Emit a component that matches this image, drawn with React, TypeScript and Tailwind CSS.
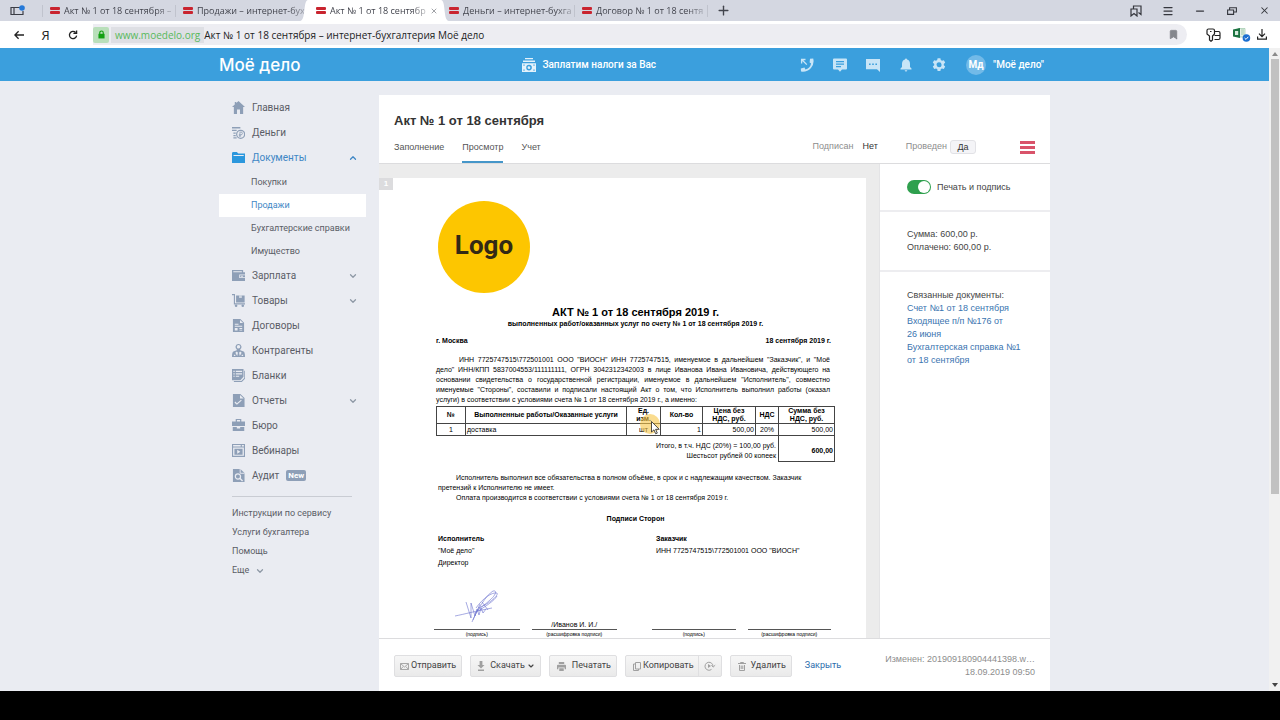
import type { ReactNode } from "react";
import { Bookmark, ChevronDown, ChevronUp, Menu, Minus, Plus, X } from "lucide-react";

const browserTabs = [
  { title: "Акт № 1 от 18 сентября –", active: false },
  { title: "Продажи – интернет-бух", active: false },
  { title: "Акт № 1 от 18 сентябр", active: true },
  { title: "Деньги – интернет-бухга", active: false },
  { title: "Договор № 1 от 18 сентя", active: false },
];

const icons: Record<string, ReactNode> = {
  home: <path d="M7 0 14 6.5h-2V14H8.6V9.2H5.4V14H2V6.5H0L3 3.7V1h1.6v1.2z" />,
  money: (
    <>
      <path d="M0 1h9v1.6H0zM0 4h5v1.5H0zM1.5 7H4v1.4H1.5zM1.5 9.6H4V11H1.5zM1.5 12H5v1.5H1.5z" />
      <circle cx="9.3" cy="9" r="4.3" fill="none" stroke="currentColor" strokeWidth="1.3" />
      <path d="M8.5 11.8V6.6h1.3a1.4 1.4 0 0 1 0 2.8H7.4M7.4 10.6h2.4" fill="none" stroke="currentColor" strokeWidth=".9" />
    </>
  ),
  folder: <path d="M0 2.5Q0 1 1.5 1h3.7l1.6 1.8H14V13H0zM1.6 4.4v.9h11v-.9z" fillRule="evenodd" />,
  wallet: (
    <path
      d="M0 1h12v2.5h2V13H0zM1.4 2.4v1.1h9.2V2.4zM7.8 6v3.8H14V9H8.8V6.8H14V6zM10 7.3v1.3h1.5V7.3z"
      fillRule="evenodd"
    />
  ),
  cart: (
    <>
      <path d="M0 0h3.2v10H14v1.4H2V1.4H0zM4.4 1.5h9.2v7.6H4.4z" />
      <path d="M7.6 1.5h3v2.8h-3z" fill="#eaecf2" opacity=".7" />
      <circle cx="4.4" cy="12.6" r="1.4" />
      <circle cx="11.6" cy="12.6" r="1.4" />
    </>
  ),
  contract: (
    <path
      d="M1 0h8l4 4v10H1zm7.6 1v3.4H12zM3 5.2v1h4v-1zM3 7.4v1h8v-1zM3 9.8v2.6h3V9.8zm5 0v1h3v-1zm0 1.7v1h3v-1z"
      fillRule="evenodd"
    />
  ),
  people: (
    <path
      d="M7 0a3.1 3.1 0 0 1 1.9 5.6v1.2l3.6 1.4Q14 9 14 14H0q0-5 1.5-5.8l3.6-1.4V5.6A3.1 3.1 0 0 1 7 0zm0 1.2a1.8 1.8 0 1 0 .1 3.7A1.8 1.8 0 0 0 7 1.2zM5.2 8 3.6 9.3l2 3.5.8-3.4zm3.6 0L7.6 9.4l.8 3.4 2-3.5zM2 11.6V13h1.6v-1.4zm8.4 0V13H12v-1.4z"
      fillRule="evenodd"
    />
  ),
  forms: (
    <path
      d="M0 0h12.4v8.4L9 12H0zm1.5 2v1.2h1.4V2zm2.6 0v1.2h6.8V2zM1.5 4.6v1.2h1.4V4.6zm2.6 0v1.2h6.8V4.6zM1.5 7.2v1.2h1.4V7.2zm2.6 0v1.2h3.6V7.2zM13.2 2H14v8.6L10.6 14H2v-1.1h8l3.2-3.2z"
      fillRule="evenodd"
    />
  ),
  reports: (
    <path
      d="M1 0h8l4.5 4.4V14H1zm7.6 1v3.9h4zM3.6 8.2l-.9 1.1 2.6 2.3 5.2-4.5-.8-1-4.4 3.8z"
      fillRule="evenodd"
    />
  ),
  briefcase: (
    <path
      d="M4 0h6v2.6h4v5H0v-5h4zm1.3 1.2v1.4h3.4V1.2zM.8 8.6h4.4v1.5h3.6V8.6h4.4V13H.8z"
      fillRule="evenodd"
    />
  ),
  webinar: (
    <path
      d="M0 0h14v14H0zm1.2 1.2v1.4h8.2V1.2zm9.4 0v1.4h2.2V1.2zM1.2 3.8v8.9h11.6V3.8zM2.6 5h8.8v6.5H2.6zm3 1.2v4.2L9 8.3z"
      fillRule="evenodd"
    />
  ),
  audit: (
    <>
      <path d="M1 0h8l4.5 4.4V14H1z" />
      <path d="M8.8 0v4.6h4.7" fill="none" stroke="#eaecf2" />
      <circle cx="6.4" cy="8" r="2.8" fill="none" stroke="#eaecf2" strokeWidth="1.3" />
      <path d="m8.4 10 3 3" stroke="#eaecf2" strokeWidth="1.5" />
    </>
  ),
};

interface NavItem {
  icon: string;
  label: string;
  expandable?: boolean;
  open?: boolean;
  badge?: string;
}

const mainNav: NavItem[] = [
  { icon: "home", label: "Главная" },
  { icon: "money", label: "Деньги" },
  { icon: "folder", label: "Документы", expandable: true, open: true },
];

const documentNav = ["Покупки", "Продажи", "Бухгалтерские справки", "Имущество"];

const restNav: NavItem[] = [
  { icon: "wallet", label: "Зарплата", expandable: true },
  { icon: "cart", label: "Товары", expandable: true },
  { icon: "contract", label: "Договоры" },
  { icon: "people", label: "Контрагенты" },
  { icon: "forms", label: "Бланки" },
  { icon: "reports", label: "Отчеты", expandable: true },
  { icon: "briefcase", label: "Бюро" },
  { icon: "webinar", label: "Вебинары" },
  { icon: "audit", label: "Аудит", badge: "New" },
];

const helpNav = ["Инструкции по сервису", "Услуги бухгалтера", "Помощь"];

function TabMark() {
  return (
    <span className="flex shrink-0 flex-col gap-px" aria-hidden>
      <span className="h-[3px] w-[10px] rounded-[1px] bg-[#c9242f]" />
      <span className="h-[3px] w-[10px] rounded-[1px] bg-[#c9242f]" />
    </span>
  );
}

function BrowserTabs() {
  return (
    <div className="flex h-[21px] bg-[#d4d7e1] font-['Open_Sans',sans-serif] text-[9px] text-[#42444d]">
      <button type="button" aria-label="Боковая панель" className="flex w-[42px] items-center pl-[10px]">
        <svg viewBox="0 0 16 12" className="h-3 w-4" fill="none" stroke="#3b3d45" strokeWidth="1.2">
          <path d="M10 2.5H1v7h12V6M4 2.5v7" />
          <circle cx="12" cy="3" r="2.8" fill="#2679d8" stroke="none" />
        </svg>
      </button>
      {browserTabs.map((tab, i) => (
        <div
          key={i}
          className={
            tab.active
              ? "relative flex w-[133px] items-center gap-1 bg-white pr-2 pl-2"
              : "flex w-[133px] items-center gap-1"
          }
        >
          {tab.active && (
            <>
              <svg viewBox="0 0 8 21" className="absolute top-0 -left-2 h-[21px] w-2" fill="#fff" aria-hidden>
                <path d="M8 0C3 0 6 21 0 21h8z" />
              </svg>
              <svg viewBox="0 0 8 21" className="absolute top-0 -right-2 h-[21px] w-2" fill="#fff" aria-hidden>
                <path d="M0 0c5 0 2 21 8 21H0z" />
              </svg>
            </>
          )}
          {!tab.active && <span className={i === 3 ? "h-3 w-1" : "h-3 w-1 border-l border-[#c0c3cd]"} />}
          <TabMark />
          <span className="whitespace-nowrap [mask-image:linear-gradient(to_right,black_85%,rgb(0_0_0/0.3))]">
            {tab.title}
          </span>
          {tab.active && (
            <button type="button" aria-label="Закрыть вкладку" className="ml-auto">
              <X className="size-[8px] text-[#70727a]" />
            </button>
          )}
        </div>
      ))}
      <button type="button" aria-label="Новая вкладка" className="flex w-8 items-center">
        <span className="h-3 border-l border-[#c0c3cd]" />
        <Plus className="ml-2 size-[15px]" strokeWidth={2.2} />
      </button>
      <div className="ml-auto flex text-[#34363d]">
        <button type="button" aria-label="Коллекции" className="flex w-8 items-center justify-center">
          <svg viewBox="0 0 12 12" className="size-3" fill="none" stroke="currentColor" strokeWidth="1.2">
            <path d="M1 4h6v7L4 8.6 1 11zM3.5 4V1H11v8.5L8.5 7.6" />
          </svg>
        </button>
        <button type="button" aria-label="Меню" className="flex w-8 items-center justify-center">
          <Menu className="size-3" strokeWidth={2.5} />
        </button>
        <button type="button" aria-label="Свернуть" className="flex w-8 items-center justify-center">
          <Minus className="size-3" strokeWidth={2.5} />
        </button>
        <button type="button" aria-label="Развернуть" className="flex w-8 items-center justify-center">
          <svg viewBox="0 0 10 8" className="h-2 w-[10px]" fill="none" stroke="currentColor" strokeWidth="1.1">
            <path d="M.6 3h6v4.4h-6zM2.6 3V.8h6.8V5H6.6" />
          </svg>
        </button>
        <button type="button" aria-label="Закрыть окно" className="flex w-8 items-center justify-center">
          <X className="size-[11px]" strokeWidth={2.2} />
        </button>
      </div>
    </div>
  );
}

function AddressBar() {
  return (
    <div className="flex h-[27px] items-center bg-white pl-[5px] font-['Open_Sans',sans-serif] text-[#222]">
      <button type="button" aria-label="Назад" className="flex w-[27px] justify-center">
        <svg viewBox="0 0 10 10" className="size-[10px]" fill="none" stroke="currentColor" strokeWidth="1.3">
          <path d="M10 5H1M4.6 1.2.9 5l3.7 3.8" />
        </svg>
      </button>
      <button type="button" aria-label="Яндекс" className="w-[27px] text-center text-[13px] leading-4">
        Я
      </button>
      <button type="button" aria-label="Обновить" className="flex w-[27px] justify-center">
        <svg viewBox="0 0 10 10" className="size-[10px]" fill="none" stroke="currentColor" strokeWidth="1.3">
          <path d="M8.6 5.6a3.6 3.6 0 1 1-1-3.1M8.6.4v3H5.4" />
        </svg>
      </button>
      <div className="ml-[7px] flex h-[21px] flex-1 items-center rounded-r-full bg-[#ededf2] pr-2">
        <span className="flex h-4 w-4 items-center justify-center rounded-xs bg-[#b9dfba]">
          <svg viewBox="0 0 8 10" className="h-[9px] w-[7px]" aria-hidden>
            <path d="M2 4.5V3a2 2 0 0 1 4 0v1.5" fill="none" stroke="#12a012" strokeWidth="1.3" />
            <path d="M.5 4.2h7V9.5h-7z" fill="#12a012" />
          </svg>
        </span>
        <span className="ml-[2px] bg-[#dedfe4] px-1 text-[10px] leading-4 text-[#58b95c]">www.moedelo.org</span>
        <input
          type="text"
          readOnly
          aria-label="Адрес страницы"
          value="Акт № 1 от 18 сентября – интернет-бухгалтерия Моё дело"
          className="min-w-0 flex-1 bg-transparent text-[10px] leading-4 outline-none"
        />
        <button type="button" aria-label="В закладки">
          <Bookmark className="size-[11px] fill-[#85878d] text-[#85878d]" />
        </button>
      </div>
      <div className="flex w-[93px] items-center gap-3 pl-[19px]">
        <button type="button" aria-label="Пароли">
          <svg viewBox="0 0 15 14" className="h-[14px] w-[15px]" fill="none" stroke="currentColor" strokeWidth="1.2">
            <path d="M2.5 1H7Q8.5 1 8.500 2.5V6l-2 2v4L5 13.3 3.5 12V8L1 6V2.5Q1 1 2.500 1zM4 3.500h1.500M8.5 3.500h4q1.500 0 1.500 1.500v5q0 1.500-1.500 1.500h-4M8.500 7.500H14" />
          </svg>
        </button>
        <button type="button" aria-label="Excel">
          <svg viewBox="0 0 18 15" className="h-[15px] w-[18px]">
            <path d="M5 1.5h7V10H5z" fill="#e6f2e9" stroke="#8dbd9a" strokeWidth=".6" />
            <path d="M8 3h3M8 5h3M8 7h3" stroke="#8dbd9a" strokeWidth=".8" />
            <path d="M0 2.5 7 1v10L0 9.6z" fill="#1c7341" />
            <path d="M2 4h3.2v4H2z" fill="#d7ebdd" />
            <circle cx="13.4" cy="11" r="3.8" fill="#1b6fd0" />
            <path d="m11.6 11 1.4 1.4 2.3-2.6" fill="none" stroke="#fff" />
          </svg>
        </button>
        <button type="button" aria-label="Загрузки" className="-ml-[6px]">
          <svg viewBox="0 0 10 11" className="h-[11px] w-[10px]" fill="none" stroke="currentColor" strokeWidth="1.2">
            <path d="M5 0v7.4M2 4.6l3 3 3-3M.6 7.6v2.6h8.8V7.6" />
          </svg>
        </button>
      </div>
    </div>
  );
}

function SiteHeader() {
  return (
    <header className="h-[33px] bg-[#3b9fdd] font-[Roboto,sans-serif]">
      <div className="mx-auto flex h-full max-w-[831px] items-center text-white">
        <a href="#" className="font-[Inter,sans-serif] text-[17px] leading-5 font-medium">
          Моё дело
        </a>
        <a href="#" className="ml-[222px] flex items-center gap-[6px] text-[10px] leading-4 font-medium">
          <svg viewBox="0 0 14 14" className="size-[14px]" fill="#e3f2fb" aria-hidden>
            <path d="M3 0h8v1.3H3zM1 2.6h12v1.3H1z" />
            <path d="M0 5.3h14V14H0zm7 1.5a2.8 2.8 0 1 0 .1 5.6A2.8 2.8 0 0 0 7 6.8zM1.4 6.6v1.2h1.2V6.6zm10 0v1.2h1.2V6.6zm-10 5v1.2h1.2v-1.2zm10 0v1.2h1.2v-1.2zM7 8.2a1.4 1.4 0 1 1-.1 2.8A1.4 1.4 0 0 1 7 8.2z" fillRule="evenodd" />
          </svg>
          Заплатим налоги за Вас
        </a>
        <div className="ml-auto flex items-center gap-[19px] text-[#c8e5f7]">
          <button type="button" aria-label="Обратный звонок">
            <svg viewBox="0 0 14 14" className="size-[14px]" fill="currentColor">
              <path d="M10 .8 13.2.4Q14.6 5.8 11 10 7 14.4 1 13.6L.8 10.400l3.700-.8.9 2q2.200-.6 3.700-2.200 1.600-1.800 2-4L9.600 4.500z" />
              <path d="M6.8 6.6 2.2 2M1.6 5.400V1.500h3.900" fill="none" stroke="currentColor" strokeWidth="1.3" />
            </svg>
          </button>
          <button type="button" aria-label="Новости">
            <svg viewBox="0 0 14 14" className="size-[14px]" fill="currentColor">
              <path d="M1 .5h12q1 0 1 1v9q0 1-1 1H9L7 13.8 5 11.5H1q-1 0-1-1v-9q0-1 1-1zM3 3v1.2h8V3zm0 2.5v1.2h8V5.500zM3 8v1.200h5V8z" fillRule="evenodd" />
            </svg>
          </button>
          <button type="button" aria-label="Чат">
            <svg viewBox="0 0 14 14" className="size-[14px]" fill="currentColor">
              <path d="M0 1h14v13l-3-2.8H0zM3 5.400v1.500h1.600V5.400zm3.200 0v1.500h1.600V5.400zm3.200 0v1.500H11V5.400z" fillRule="evenodd" />
            </svg>
          </button>
          <button type="button" aria-label="Уведомления">
            <svg viewBox="0 0 14 14" className="size-[14px]" fill="currentColor">
              <path d="M7 .5q1 0 1 1.1 3 .8 3 4.400v3l1.500 1.500V11.500h-11V10.500L3 9V6q0-3.600 3-4.400Q6 .5 7 .5zM5.700 12.200h2.600q0 1.400-1.300 1.400t-1.300-1.400z" />
            </svg>
          </button>
          <button type="button" aria-label="Настройки">
            <svg viewBox="0 0 14 14" className="size-[14px]" fill="currentColor">
              <path d="M5.6.3h2.800l.4 1.800 1.200.7 1.800-.6 1.400 2.400-1.400 1.300v1.400l1.400 1.300-1.400 2.400-1.800-.6-1.200.7-.4 1.800H5.600l-.4-1.800-1.200-.7-1.800.6L.8 8.600l1.400-1.300V5.900L.8 4.600l1.400-2.400 1.800.6 1.200-.7zM7 4.200a2.500 2.500 0 1 0 .1 5A2.500 2.500 0 0 0 7 4.200z" fillRule="evenodd" />
            </svg>
          </button>
        </div>
        <button type="button" className="ml-5 flex items-center gap-[7px] text-[10px] leading-4 font-medium">
          <span className="flex size-5 items-center justify-center rounded-full bg-[#72bae8] text-[10px] font-bold">
            Мд
          </span>
          <span className="pr-[6px]">"Моё дело"</span>
        </button>
      </div>
    </header>
  );
}

function NavRow({ item }: { item: NavItem }) {
  const Chevron = item.open ? ChevronUp : ChevronDown;
  return (
    <li>
      <a
        href="#"
        className={
          item.open
            ? "flex h-[25px] items-center pr-2 pl-[13px] text-[#3f87c5]"
            : "flex h-[25px] items-center pr-2 pl-[13px]"
        }
      >
        <svg
          viewBox="0 0 14 14"
          className={item.open ? "h-[13px] w-[13px] text-[#2b97dd]" : "h-[13px] w-[13px] text-[#8e9fb7]"}
          fill="currentColor"
          aria-hidden
        >
          {icons[item.icon]}
        </svg>
        <span className="ml-[7px]">{item.label}</span>
        {item.badge && (
          <span className="ml-[7px] rounded-xs bg-[#8e9fb7] px-[2px] text-[8px] leading-[11px] font-bold text-white">
            {item.badge}
          </span>
        )}
        {item.expandable && (
          <Chevron
            className={item.open ? "ml-auto size-[10px] text-[#3f87c5]" : "ml-auto size-[10px] text-[#8e98a5]"}
            strokeWidth={3}
          />
        )}
      </a>
    </li>
  );
}

function Sidebar() {
  return (
    <nav className="w-[147px] shrink-0 font-[Roboto,sans-serif] text-[10px] text-[#5a5d66]">
      <ul>
        {mainNav.map((item) => (
          <NavRow key={item.label} item={item} />
        ))}
      </ul>
      <ul className="pt-px text-[9px]">
        {documentNav.map((label) => (
          <li key={label}>
            <a
              href="#"
              className={
                label === "Продажи"
                  ? "flex h-[23px] items-center bg-white pl-8 text-[#3f87c5]"
                  : "flex h-[23px] items-center pl-8"
              }
            >
              {label}
            </a>
          </li>
        ))}
      </ul>
      <ul>
        {restNav.map((item) => (
          <NavRow key={item.label} item={item} />
        ))}
      </ul>
      <hr className="mt-2 mr-[14px] ml-[13px] border-[#c9ccd3]" />
      <ul className="mt-[7px] pl-[13px] text-[9px]">
        {helpNav.map((label) => (
          <li key={label}>
            <a href="#" className="flex h-[19px] items-center">
              {label}
            </a>
          </li>
        ))}
        <li>
          <button type="button" className="flex h-[19px] items-center gap-[6px]">
            Еще
            <ChevronDown className="size-[10px] text-[#8e98a5]" strokeWidth={3} />
          </button>
        </li>
      </ul>
    </nav>
  );
}

function CardHeader() {
  return (
    <div className="border-b border-[#dcdcde] px-[15px] pt-4">
      <h1 className="text-[13px] leading-5 font-bold text-[#333]">Акт № 1 от 18 сентября</h1>
      <div className="flex h-8 items-center text-[9px] text-[#555]">
        <div className="flex h-full gap-[18px]">
          <button type="button" className="h-full border-b-2 border-transparent pt-1">
            Заполнение
          </button>
          <button type="button" className="h-full border-b-2 border-[#4596c9] pt-1">
            Просмотр
          </button>
          <button type="button" className="h-full border-b-2 border-transparent pt-1">
            Учет
          </button>
        </div>
        <span className="ml-auto text-[#8d8d8d]">Подписан</span>
        <span className="ml-[9px] text-[#333]">Нет</span>
        <span className="ml-7 text-[#8d8d8d]">Проведен</span>
        <button
          type="button"
          className="ml-[3px] h-[14px] w-[26px] rounded-[3px] border border-[#e2e2e6] bg-[#f4f4f7] text-[9px] leading-3 text-[#333]"
        >
          Да
        </button>
        <button type="button" aria-label="Меню документа" className="ml-11 flex w-[15px] flex-col gap-[2px]">
          <span className="h-[3px] bg-[#d9536a]" />
          <span className="h-[3px] bg-[#d9536a]" />
          <span className="h-[3px] bg-[#d9536a]" />
        </button>
      </div>
    </div>
  );
}

function ItemsTable() {
  return (
    <table className="mt-px w-full table-fixed border-collapse">
      <colgroup>
        <col className="w-[29px]" />
        <col />
        <col className="w-[34px]" />
        <col className="w-[42px]" />
        <col className="w-[53px]" />
        <col className="w-[23px]" />
        <col className="w-[56px]" />
      </colgroup>
      <thead>
        <tr className="h-[17px] leading-2 [&>th]:border [&>th]:border-[#444]">
          <th>№</th>
          <th>Выполненные работы/Оказанные услуги</th>
          <th className="relative">
            Ед.
            <br />
            изм.
            <span className="absolute top-[7px] left-[13px] size-5 rounded-full bg-[#f6c544]/60" />
            <svg viewBox="0 0 9 14" className="absolute top-[14px] left-6 z-10 h-[14px] w-[9px]" aria-hidden>
              <path d="M.5.5V11L3 8.800l1.700 4 1.600-.7-1.700-3.800h3.600z" fill="#fff" stroke="#222" strokeWidth=".8" />
            </svg>
          </th>
          <th>Кол-во</th>
          <th>
            Цена без
            <br />
            НДС, руб.
          </th>
          <th>НДС</th>
          <th>
            Сумма без
            <br />
            НДС, руб.
          </th>
        </tr>
      </thead>
      <tbody>
        <tr className="h-3 leading-[10px] [&>td]:border [&>td]:border-[#444] [&>td]:px-px">
          <td className="text-center">1</td>
          <td>доставка</td>
          <td className="text-center">шт</td>
          <td className="text-right">1</td>
          <td className="text-right">500,00</td>
          <td className="text-center">20%</td>
          <td className="text-right">500,00</td>
        </tr>
        <tr className="h-[26px] leading-[10px]">
          <td colSpan={6} className="pt-1 pr-[2px] text-right">
            Итого, в т.ч. НДС (20%) = 100,00 руб.
            <br />
            Шестьсот рублей 00 копеек
          </td>
          <td className="border border-[#444] px-px pt-1 text-right font-bold">600,00</td>
        </tr>
      </tbody>
    </table>
  );
}

function SignatureField({ caption, name, signed }: { caption: string; name?: string; signed?: boolean }) {
  return (
    <div>
      <div className="flex h-[61px] flex-col items-center justify-end border-b border-[#555] leading-2">
        {signed && (
          <svg viewBox="0 0 46 36" className="mb-1 h-9 w-[46px]" fill="none" stroke="#6a70cf" strokeWidth=".6" aria-hidden>
            <path d="M1 27c10-2 21-5 37-8M12 13l5 16 0-15 4 13 2-7 2 6 2-7 2 5 3-4M18 33C22 23 32 6 39 2c5-1 2 5-3 9-5 5-11 8-15 13M22 19C29 9 38 3 43 4c2 3-10 12-19 15M24 22C32 17 40 12 43 7M19 31l7-16M28 13l6 8" />
          </svg>
        )}
        {name}
      </div>
      <p className="text-center text-[5px] leading-2">{caption}</p>
    </div>
  );
}

function DocumentSheet() {
  return (
    <article className="relative h-full bg-white pr-[31px] pl-[57px] text-[7px] leading-[10px] text-black">
      <span className="absolute top-0 left-0 h-3 w-[14px] bg-[#dcdcde] text-center text-[8px] leading-3 font-bold text-white">
        1
      </span>
      <div className="pt-[23px]">
        <svg viewBox="0 0 92 92" className="ml-[2px] size-[92px]" role="img" aria-label="Logo">
          <circle cx="46" cy="46" r="46" fill="#fdc600" />
          <text
            x="46"
            y="53"
            textAnchor="middle"
            fill="#332915"
            className="font-[Roboto,sans-serif] text-[26px] font-bold"
          >
            Logo
          </text>
        </svg>
      </div>
      <h2 className="mt-3 text-center text-[11px] leading-[14px] font-bold">АКТ № 1 от 18 сентября 2019 г.</h2>
      <p className="text-center font-bold">выполненных работ/оказанных услуг по счету № 1 от 18 сентября 2019 г.</p>
      <p className="mt-[7px] mr-1 flex justify-between font-bold">
        <span>г. Москва</span>
        <span>18 сентября 2019 г.</span>
      </p>
      <p className="mt-[9px] mr-[5px] text-justify indent-[23px]">
        ИНН 7725747515\772501001 ООО "ВИОСН" ИНН 7725747515, именуемое в дальнейшем "Заказчик", и "Моё дело" ИНН/КПП
        5837004553/111111111, ОГРН 3042312342003 в лице Иванова Ивана Ивановича, действующего на основании свидетельства
        о государственной регистрации, именуемое в дальнейшем "Исполнитель", совместно именуемые "Стороны", составили и
        подписали настоящий Акт о том, что Исполнитель выполнил работы (оказал услуги)&nbsp;в&nbsp;соответствии с
        условиями счета № 1 от 18 сентября 2019 г., а именно:
      </p>
      <ItemsTable />
      <div className="mt-[11px] mr-[5px] ml-[2px] indent-[18px]">
        <p>
          Исполнитель выполнил все обязательства в полном объёме, в срок и с надлежащим качеством. Заказчик претензий к
          Исполнителю не имеет.
        </p>
        <p>Оплата производится в соответствии с условиями счета № 1 от 18 сентября 2019 г.</p>
      </div>
      <p className="mt-[11px] text-center font-bold">Подписи Сторон</p>
      <div className="mt-[9px] ml-[2px] grid grid-cols-[218px_1fr] leading-3">
        <div>
          <p className="font-bold">Исполнитель</p>
          <p>"Моё дело"</p>
          <p>Директор</p>
        </div>
        <div>
          <p className="font-bold">Заказчик</p>
          <p>ИНН 7725747515\772501001 ООО "ВИОСН"</p>
        </div>
      </div>
      <div className="mr-1 -ml-[2px] grid grid-cols-[206px_1fr] gap-3">
        <div className="grid grid-cols-2 gap-3 pr-[23px]">
          <SignatureField caption="(подпись)" signed />
          <SignatureField caption="(расшифровка подписи)" name="/Иванов И. И./" />
        </div>
        <div className="grid grid-cols-2 gap-3">
          <SignatureField caption="(подпись)" />
          <SignatureField caption="(расшифровка подписи)" />
        </div>
      </div>
    </article>
  );
}

function DetailsPanel() {
  return (
    <aside className="w-[171px] shrink-0 border-l border-[#e4e4e6] bg-white text-[9px] leading-[13px] text-[#444]">
      <div className="flex h-12 items-center border-b-2 border-[#ededf0] pl-[27px]">
        <label className="flex items-center gap-[6px]">
          <input
            type="checkbox"
            defaultChecked
            className="relative h-[14px] w-6 appearance-none rounded-full bg-[#b8b8b8] before:absolute before:top-px before:left-px before:size-3 before:rounded-full before:bg-white checked:bg-[#2fa04e] checked:before:left-[11px]"
          />
          Печать и подпись
        </label>
      </div>
      <div className="flex h-[60px] flex-col justify-center border-b-2 border-[#ededf0] pl-[27px]">
        <p>Сумма: 600,00 р.</p>
        <p>Оплачено: 600,00 р.</p>
      </div>
      <div className="flex flex-col items-start pt-[17px] pr-[27px] pl-[27px] text-[#3a74b0]">
        <p className="text-[#444]">Связанные документы:</p>
        <a href="#">Счет №1 от 18 сентября</a>
        <a href="#">Входящее п/п №176 от 26&nbsp;июня</a>
        <a href="#">Бухгалтерская справка №1 от 18 сентября</a>
      </div>
    </aside>
  );
}

function ActionButton({ children }: { children: ReactNode }) {
  return (
    <button
      type="button"
      className="flex h-[22px] items-center gap-[2px] rounded-[2px] border border-[#dfdfe1] bg-linear-to-b from-[#f6f6f6] to-[#eaeaea] px-[5px] whitespace-nowrap"
    >
      {children}
    </button>
  );
}

function ActionBar() {
  return (
    <footer className="flex h-[53px] items-center border-t border-[#dcdcde] bg-white px-[15px] pt-[2px] font-[Roboto,sans-serif] text-[9px] text-[#444]">
      <div className="flex items-center gap-2">
        <ActionButton>
          <svg viewBox="0 0 9 7" className="h-[7px] w-[9px]" fill="none" stroke="#a8a8a8" aria-hidden>
            <path d="M.5.5h8v6h-8zM.5.5l4 3.500 4-3.500M.5 6.500l2.700-3M8.500 6.500l-2.700-3" />
          </svg>
          Отправить
        </ActionButton>
        <ActionButton>
          <svg viewBox="0 0 10 10" className="mr-[2px] size-[10px]" fill="#a0a0a0" aria-hidden>
            <path d="M3.6 0h2.800v4H8.500L5 7.600 1.500 4h2.100zM2 8.400h6V10H2z" />
          </svg>
          Скачать
          <ChevronDown className="size-2" strokeWidth={3.5} />
        </ActionButton>
        <ActionButton>
          <svg viewBox="0 0 10 10" className="mr-1 ml-[2px] h-[9px] w-[9px]" fill="#a0a0a0" aria-hidden>
            <path d="M2 0h6v2.200H2zM1 3h8q1 0 1 1v4H8.500V6h-7v2H0V4q0-1 1-1zm1.500 4h5v3h-5z" />
          </svg>
          Печатать
        </ActionButton>
        <div className="flex h-[22px] rounded-[2px] border border-[#dfdfe1] bg-linear-to-b from-[#f6f6f6] to-[#eaeaea]">
          <button type="button" className="flex items-center gap-[2px] pr-1 pl-[7px]">
            <svg viewBox="0 0 8 9" className="h-[9px] w-2" fill="none" stroke="#a0a0a0" aria-hidden>
              <path d="M2.5.5h5V7h-5zM2.500 2H.5v6.500h5V7" />
            </svg>
            Копировать
          </button>
          <button
            type="button"
            aria-label="Повторять"
            className="flex w-[23px] items-center justify-center border-l border-[#dfdfe1]"
          >
            <svg viewBox="0 0 12 10" className="h-[10px] w-3" fill="none" stroke="#a0a0a0">
              <path d="M7.5 8.400A4 4 0 1 1 9 5.500M7.400 4.400 9.200 6l2-1.800" />
              <path d="M4 3v4l3-2z" fill="#a0a0a0" stroke="none" />
            </svg>
          </button>
        </div>
        <ActionButton>
          <svg viewBox="0 0 8 9" className="mr-[3px] ml-[2px] h-[9px] w-2" fill="none" stroke="#a0a0a0" aria-hidden>
            <path d="M0 1.500h8M2.500 1.500v-1h3v1M1.500 3v5.500h5V3M3.200 3.500V7M4.800 3.500V7" />
          </svg>
          Удалить
        </ActionButton>
      </div>
      <a href="#" className="ml-[13px] text-[#2b6cac]">
        Закрыть
      </a>
      <p className="ml-auto text-right font-['Liberation_Sans',sans-serif] leading-[13px] text-[#8d8d8d]">
        Изменен: 201909180904441398.w…
        <br />
        18.09.2019 09:50
      </p>
    </footer>
  );
}

function ScrollBar() {
  return (
    <div className="flex w-[11px] flex-col items-center bg-[#f1f1f1] py-1" aria-hidden>
      <svg viewBox="0 0 6 4" className="h-1 w-[6px]" fill="#8a8a8a">
        <path d="M3 0 6 4H0z" />
      </svg>
      <div className="my-[3px] flex flex-1 flex-col">
        <div className="w-2 flex-[70] bg-[#c1c1c1]" />
        <div className="flex-[30]" />
      </div>
      <svg viewBox="0 0 6 4" className="h-1 w-[6px]" fill="#444">
        <path d="M3 4 0 0h6z" />
      </svg>
    </div>
  );
}

export default function App() {
  return (
    <div className="flex min-h-screen flex-col bg-black">
      <BrowserTabs />
      <AddressBar />
      <div className="flex flex-1">
        <div className="flex min-w-0 flex-1 flex-col bg-[#eaecf2]">
          <SiteHeader />
          <div className="mx-auto flex w-full max-w-[831px] flex-1 gap-[13px] pt-[14px]">
            <Sidebar />
            <main className="flex min-w-0 flex-1 flex-col bg-white font-['Liberation_Sans',Arial,sans-serif]">
              <CardHeader />
              <div className="flex flex-1">
                <div className="min-w-0 flex-1 bg-[#ececec] pt-[14px] pr-[13px]">
                  <DocumentSheet />
                </div>
                <DetailsPanel />
              </div>
              <ActionBar />
            </main>
          </div>
        </div>
        <ScrollBar />
      </div>
      <div className="h-[29px] shrink-0 bg-black" />
    </div>
  );
}
